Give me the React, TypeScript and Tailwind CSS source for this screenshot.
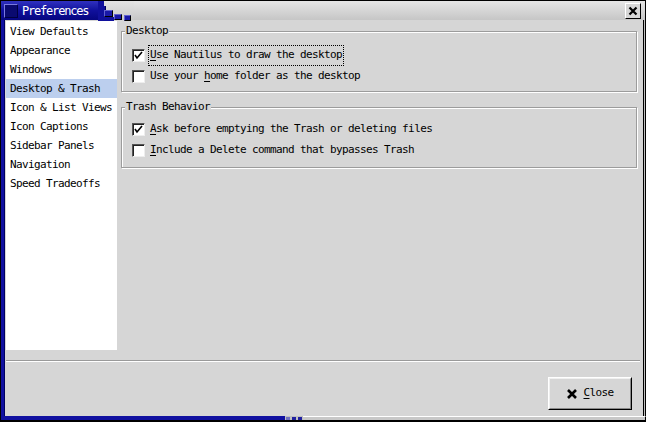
import React from "react";

const font = { fontFamily: '"DejaVu Sans Mono", "Liberation Mono", monospace' };

function Check({ checked }: { checked: boolean }) {
  return (
    <div className="relative w-[13px] h-[13px] bg-white border border-t-[#555] border-l-[#555] border-r-[#eee] border-b-[#eee] shadow-[inset_1px_1px_0_#222] shrink-0">
      {checked && (
        <svg width="11" height="11" viewBox="0 0 11 11" className="absolute left-0 top-0">
          <path d="M2 5 L4 8 L9 2" stroke="#000" strokeWidth="1.6" fill="none" />
        </svg>
      )}
    </div>
  );
}

function Row({ checked, pre, u, post, focus }: { checked: boolean; pre: string; u: string; post: string; focus?: boolean }) {
  return (
    <div className="h-[21px] flex items-center pl-[10px]">
      <Check checked={checked} />
      <div className={"ml-[4px] px-[1px] h-[19px] flex items-center " + (focus ? "outline outline-1 outline-dotted outline-black" : "")}>
        <span>
          {pre}
          <span className="underline underline-offset-2">{u}</span>
          {post}
        </span>
      </div>
    </div>
  );
}

function Frame({ label, children, top }: { label: string; children: React.ReactNode; top: string }) {
  return (
    <div className={"relative border border-[#9c9c9c] shadow-[inset_1px_1px_0_#fff,1px_1px_0_#fff] " + top}>
      <div className="absolute left-[3px] -top-[8px] bg-[#d6d6d6] px-[1px] leading-[14px]">{label}</div>
      {children}
    </div>
  );
}

export default function App() {
  const items = [
    "View Defaults",
    "Appearance",
    "Windows",
    "Desktop & Trash",
    "Icon & List Views",
    "Icon Captions",
    "Sidebar Panels",
    "Navigation",
    "Speed Tradeoffs",
  ];
  return (
    <div
      className="w-[646px] h-[422px] bg-[#d6d6d6] flex flex-col text-[11px] tracking-[-0.62px] text-black overflow-hidden"
      style={font}
    >
      {/* Title bar */}
      <div className="h-[20px] flex shrink-0">
        <div className="w-[98px] h-[20px] bg-gradient-to-b from-[#3030c0] via-[#10109c] to-[#060680] flex items-center border-l border-t border-black">
          <div className="ml-[3px] w-[14px] h-[14px] bg-[#0a0a70] border border-t-[#7a7ae0] border-l-[#7a7ae0] border-r-[#000040] border-b-[#000040]" />
          <span className="ml-[4px] text-white text-[12px] tracking-[-1.2px]">Preferences</span>
        </div>
        <div className="relative w-[36px] h-[20px] bg-gradient-to-b from-[#e4e4e4] to-[#c8c8c8] border-t border-black">
          <div className="absolute left-0 top-0 w-[6px] h-[6px] bg-[#10109c]" />
          <div className="absolute left-0 top-[5px] w-[8px] h-[6px] bg-[#10109c] border-r border-b border-[#000050]" />
          <div className="absolute left-[6px] top-[9px] w-[9px] h-[7px] bg-[#1818a8] border border-t-[#6060d0] border-l-[#6060d0] border-r-black border-b-black" />
          <div className="absolute left-[0px] top-[10px] w-[6px] h-[10px] bg-[#10109c]" />
          <div className="absolute left-[16px] top-[13px] w-[8px] h-[6px] bg-[#1818a8] border border-t-[#6060d0] border-l-[#6060d0] border-r-black border-b-black" />
          <div className="absolute left-[26px] top-[14px] w-[7px] h-[6px] bg-[#1818a8] border border-t-[#6060d0] border-l-[#6060d0] border-r-black border-b-black" />
          <div className="absolute left-[6px] top-[16px] w-[10px] h-[4px] bg-[#10109c]" />
        </div>
        <div className="flex-1 h-[20px] bg-gradient-to-b from-[#e6e6e6] to-[#c6c6c6] border-t border-r border-black flex items-center justify-end pr-[4px]">
          <div className="w-[16px] h-[16px] bg-[#d6d6d6] border border-t-white border-l-white border-r-black border-b-black flex items-center justify-center">
            <svg width="10" height="10" viewBox="0 0 10 10">
              <path d="M1.5 1.5 L8.5 8.5 M8.5 1.5 L1.5 8.5" stroke="#000" strokeWidth="2.2" />
            </svg>
          </div>
        </div>
      </div>

      {/* Middle */}
      <div className="flex-1 flex min-h-0">
        <div className="w-[5px] bg-[#1010a0] border-l border-black border-r border-r-[#000060]" />
        <div className="flex-1 flex flex-col">
          <div className="flex pt-[1px] pl-[1px]">
            <div className="w-[111px] h-[329px] bg-white pt-[1px]">
              {items.map((t, i) => (
                <div
                  key={t}
                  className={"h-[19px] flex items-center pl-[4px] pt-[1px] " + (i === 3 ? "bg-[#bccfee]" : "")}
                >
                  {t}
                </div>
              ))}
            </div>
            <div className="flex-1 pl-[4px] pr-[3px] pt-[10px]">
              <Frame label="Desktop" top="">
                <div className="pt-[13px] pb-[4px]">
                  <Row checked pre="" u="U" post="se Nautilus to draw the desktop" focus />
                  <Row checked={false} pre="Use your " u="h" post="ome folder as the desktop" />
                </div>
              </Frame>
              <Frame label="Trash Behavior" top="mt-[15px]">
                <div className="pt-[11px] pb-[6px]">
                  <Row checked pre="" u="A" post="sk before emptying the Trash or deleting files" />
                  <Row checked={false} pre="" u="I" post="nclude a Delete command that bypasses Trash" />
                </div>
              </Frame>
            </div>
          </div>
          <div className="mt-[10px] ml-[1px] h-[2px] border-t border-[#9a9a9a] border-b border-b-white" />
          <div className="flex justify-end pr-[8px] pt-[15px]">
            <div className="w-[84px] h-[33px] border border-t-white border-l-white border-r-black border-b-black">
              <div className="w-full h-full border border-t-[#f0f0f0] border-l-[#f0f0f0] border-r-[#8a8a8a] border-b-[#8a8a8a] flex items-center justify-center gap-[5px]">
                <svg width="12" height="12" viewBox="0 0 12 12">
                  <path d="M2 2 L10 10 M10 2 L2 10" stroke="#000" strokeWidth="2.6" />
                </svg>
                <span>
                  <span className="underline underline-offset-2">C</span>lose
                </span>
              </div>
            </div>
          </div>
        </div>
        <div className="w-[6px] flex">
          <div className="w-[3px] bg-[#d6d6d6]" />
          <div className="w-[1px] bg-black" />
          <div className="w-[2px] bg-[#c0c0c0] border-r border-black" />
        </div>
      </div>

      {/* Bottom border */}
      <div className="h-[6px] flex shrink-0">
        <div className="w-[285px] bg-[#1010a0] border-b-2 border-black border-l border-l-black" />
        <div className="relative w-[18px] bg-[#c0c0c0] border-b-2 border-black">
          <div className="absolute left-[1px] top-[1px] w-[4px] h-[3px] bg-[#7070c0]" />
          <div className="absolute left-[7px] top-[1px] w-[4px] h-[3px] bg-[#2020a0]" />
          <div className="absolute left-[13px] top-[1px] w-[4px] h-[3px] bg-[#2020a0]" />
        </div>
        <div className="flex-1 bg-[#c8c8c8] border-t border-white border-b-2 border-b-black border-r border-r-black" />
      </div>
    </div>
  );
}
